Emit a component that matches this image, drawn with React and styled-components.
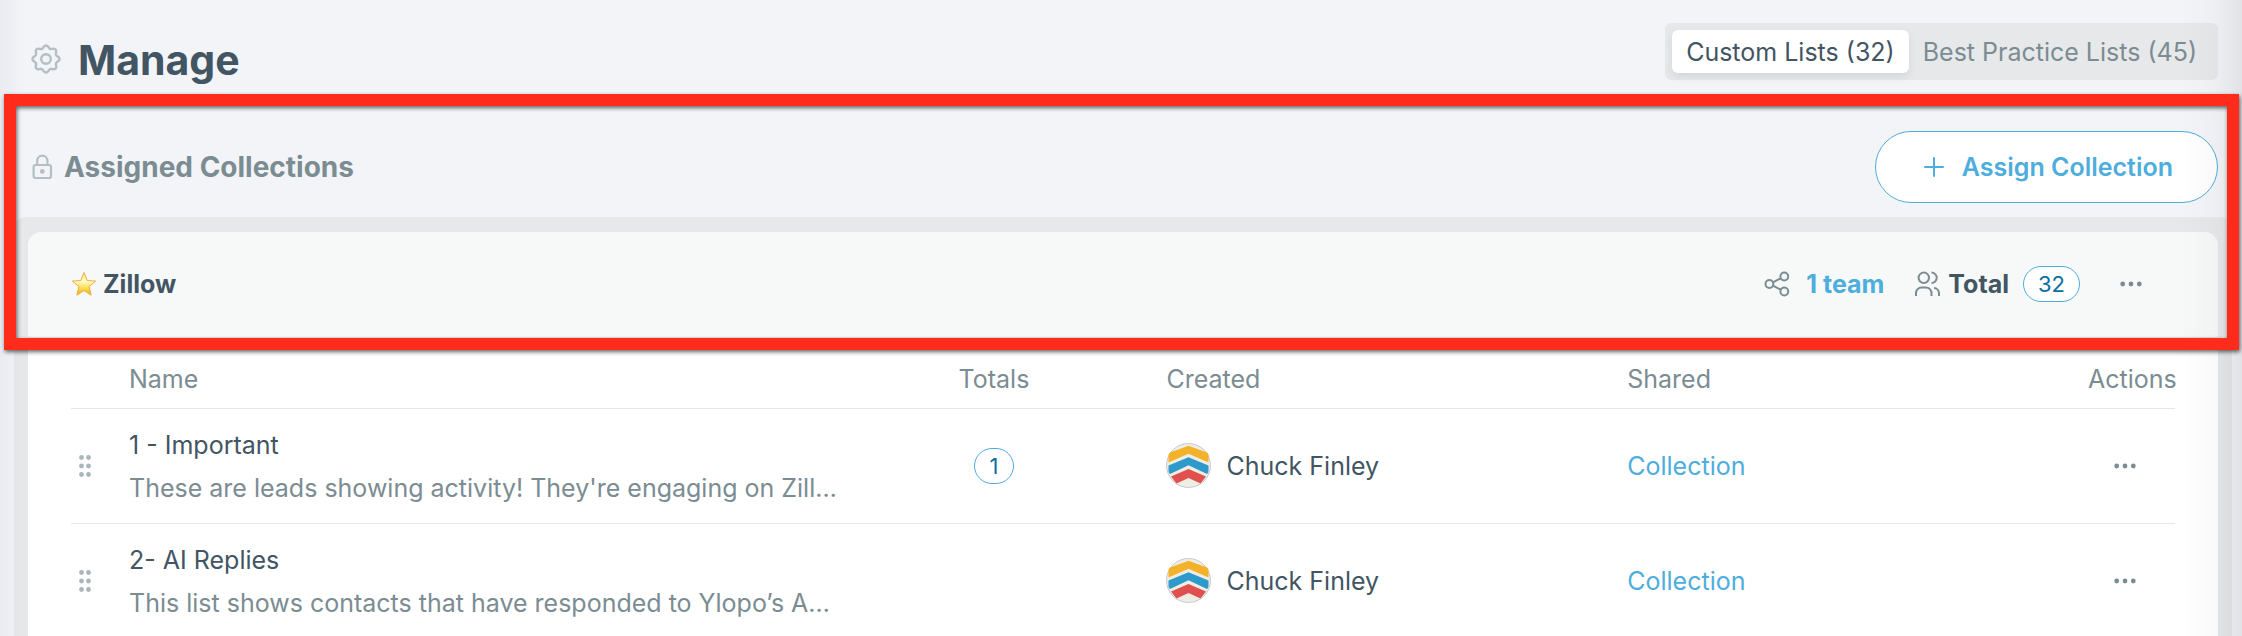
import React from "react";
import styled, { createGlobalStyle } from "styled-components";

const Global = createGlobalStyle`
  *, *::before, *::after { box-sizing: border-box; }
  body { margin: 0; background: #f3f4f8; color: #425563; font: 400 25px/32px Inter, "Liberation Sans", sans-serif; }
  button { font: inherit; color: inherit; cursor: pointer; }
  svg { display: block; flex: none; }
`;

const Page = styled.main`
  position: relative;
  min-height: 100vh;
  display: flex;
  flex-direction: column;
`;
const EdgeShade = styled.div`
  position: absolute;
  inset: 0;
  pointer-events: none;
  background:
    linear-gradient(to right, rgba(60, 70, 110, 0.05), transparent 24px),
    linear-gradient(to left, rgba(0, 0, 0, 0.07), rgba(0, 0, 0, 0.02) 28px, transparent 64px);
`;
const TopBar = styled.header`
  display: flex;
  align-items: flex-start;
  justify-content: space-between;
  height: 94px;
  padding: 23px 24px 0 31px;
`;
const TitleGroup = styled.div`
  display: flex;
  align-items: center;
  gap: 17px;
  height: 72px;
`;
const Title = styled.h1`
  margin: 0;
  padding-top: 1px;
  font-size: 41px;
  line-height: 48px;
  font-weight: 700;
`;
const Tabs = styled.div`
  display: flex;
  padding: 7px;
  border-radius: 6px;
  background: #e7e8ea;
`;
const Tab = styled.button`
  height: 43px;
  padding: 0 14px;
  border: 0;
  border-radius: 6px;
  color: ${(p) => (p.$active ? "#425563" : "#7b8c92")};
  background: ${(p) => (p.$active ? "#fff" : "transparent")};
  box-shadow: ${(p) => (p.$active ? "0 4px 8px rgba(66, 85, 99, 0.12)" : "none")};
`;
const Section = styled.section`
  position: relative;
  flex: 1;
  display: flex;
  flex-direction: column;
`;
const Highlight = styled.div`
  position: absolute;
  z-index: 2;
  top: 0;
  left: 4px;
  right: 3px;
  height: 256px;
  border: 12px solid #ff2c1b;
  filter: drop-shadow(1px 2px 2px rgba(0, 0, 0, 0.6));
  pointer-events: none;
`;
const SectionBar = styled.div`
  display: flex;
  align-items: center;
  justify-content: space-between;
  height: 123px;
  padding: 23px 24px 0 31px;
`;
const SectionTitle = styled.h2`
  display: flex;
  align-items: center;
  gap: 11px;
  margin: 0;
  font-size: 28px;
  font-weight: 700;
  color: #7b8c92;
`;
const AssignButton = styled.button`
  display: flex;
  align-items: center;
  gap: 18px;
  height: 72px;
  padding: 0 44px 0 48px;
  border: 1px solid #4daddd;
  border-radius: 36px;
  background: #fff;
  color: #4daddd;
  font-weight: 600;
`;
const Tray = styled.div`
  flex: 1;
  display: flex;
  margin: 0 10px 0 14px;
  padding: 15px 14px 0;
  border-radius: 12px 12px 0 0;
  background: #e7e8ea;
`;
const Card = styled.article`
  flex: 1;
  min-width: 0;
  border-radius: 14px 14px 0 0;
  background: #fff;
  overflow: hidden;
`;
const CardHeader = styled.header`
  display: flex;
  align-items: center;
  justify-content: space-between;
  height: 106px;
  padding: 0 76px 2px 43px;
  background: #f7f9f8;
  border-bottom: 1px solid #e2e5e6;
`;
const CardTitle = styled.h3`
  display: flex;
  align-items: center;
  gap: 6px;
  margin: 0;
  font-size: 25px;
  font-weight: 700;
`;
const Meta = styled.div`
  display: flex;
  align-items: center;
  font-weight: 700;
`;
const MetaItem = styled.div`
  display: flex;
  align-items: center;
  gap: ${(p) => p.$gap}px;
  margin-right: ${(p) => p.$after}px;
`;
const Link = styled.a`
  color: #4daddd;
  text-decoration: none;
`;
const Count = styled.span`
  display: inline-flex;
  align-items: center;
  justify-content: center;
  height: 36px;
  min-width: 40px;
  padding: 0 14px;
  border: 1px solid #4daddd;
  border-radius: 18px;
  background: #fff;
  color: #0a6f9e;
  font-size: 22px;
  font-weight: 400;
`;
const IconButton = styled.button`
  display: flex;
  margin-left: auto;
  padding: 8px 0;
  border: 0;
  background: none;
  color: #7b8c92;
`;
const TableWrap = styled.div`
  padding: 0 43px;
`;
const Table = styled.table`
  width: 100%;
  table-layout: fixed;
  border-collapse: collapse;
`;
const Col = styled.col`
  width: ${(p) => p.$width};
`;
const Head = styled.th`
  height: 70px;
  padding: 13px 0 0;
  border-bottom: 1px solid #e5e7e8;
  font-weight: 400;
  text-align: ${(p) => p.$align || "left"};
  color: #7b8c92;
`;
const Cell = styled.td`
  height: 115px;
  padding: 0 ${(p) => p.$end || 0}px 0 ${(p) => p.$start || 0}px;
  border-bottom: 1px solid #e5e7e8;
  text-align: ${(p) => p.$align || "left"};
  vertical-align: middle;
`;
const ListName = styled.div`
  margin: 1px 0 11px;
`;
const ListNote = styled.div`
  color: #7b8c92;
  white-space: nowrap;
`;
const Person = styled.div`
  display: flex;
  align-items: center;
  gap: 15px;
`;

// Eight soft lobes: the radius follows a cosine wave around the centre.
const gearOutline =
  Array.from({ length: 144 }, (_, i) => {
    const a = (i / 144) * Math.PI * 2;
    const r = 12.2 + 1.3 * Math.cos(8 * a);
    return `${i ? "L" : "M"}${(15 + r * Math.cos(a)).toFixed(2)} ${(15 + r * Math.sin(a)).toFixed(2)}`;
  }).join("") + "z";

const Gear = () => (
  <svg width="30" height="30" viewBox="0 0 30 30" fill="none" stroke="#b3bfc3" strokeWidth="2.4" strokeLinejoin="round">
    <path d={gearOutline} />
    <circle cx="15" cy="15" r="4.8" />
  </svg>
);
const Lock = () => (
  <svg width="22" height="26" viewBox="0 0 22 26" fill="none" stroke="#b3bfc3" strokeWidth="2.2">
    <rect x="2.6" y="11" width="17.4" height="13" rx="2" />
    <path d="M6.2 11V6.800a5.100 5.100 0 0 1 10.200 0V11" />
    <circle cx="11.300" cy="17.400" r="2.400" fill="#b3bfc3" stroke="none" />
  </svg>
);
const Plus = () => (
  <svg width="20" height="20" viewBox="0 0 20 20" stroke="currentColor" strokeWidth="2" strokeLinecap="round">
    <path d="M10 1v18M1 10h18" />
  </svg>
);
const Star = () => (
  <svg width="26" height="26" viewBox="0 0 26 26">
    <defs>
      <linearGradient id="star" x1="0" y1="0" x2="0" y2="1">
        <stop offset="0" stopColor="#fde78a" />
        <stop offset="0.4" stopColor="#fffbc4" />
        <stop offset="0.7" stopColor="#fcdb4c" />
        <stop offset="1" stopColor="#f3a820" />
      </linearGradient>
    </defs>
    <path d="M13 1.500l3.200 8 8.500.600-6.600 5.500 2.100 8.600-7.200-4.600L5.800 24.200l2.100-8.600L1.300 10.100l8.500-.6z" fill="url(#star)" stroke="#ecae45" strokeWidth="1" strokeLinejoin="round" />
  </svg>
);
const Share = () => (
  <svg width="26" height="26" viewBox="0 0 26 26" fill="none" stroke="#7b8c92" strokeWidth="2">
    <circle cx="5.400" cy="13" r="3.900" />
    <circle cx="20.300" cy="5.500" r="3.900" />
    <circle cx="20.300" cy="20.500" r="3.900" />
    <path d="M8.900 11.300l7.900-4M8.900 14.700l7.900 4" />
  </svg>
);
const Users = () => (
  <svg width="26" height="26" viewBox="0 0 26 26" fill="none" stroke="#7b8c92" strokeWidth="2">
    <circle cx="9.800" cy="6.800" r="5.200" />
    <path d="M2 25v-3a5.500 5.500 0 0 1 5.500-5.500h4.500A5.500 5.500 0 0 1 17.500 22v3" />
    <path d="M17.500 1.600a5.200 5.200 0 0 1 0 10.400M20 17a5.300 5.300 0 0 1 5 5.300V25" />
  </svg>
);
const Dots = () => (
  <svg width="22" height="6" viewBox="0 0 22 6" fill="currentColor">
    <circle cx="2.700" cy="3" r="2.400" />
    <circle cx="11" cy="3" r="2.400" />
    <circle cx="19.300" cy="3" r="2.400" />
  </svg>
);
const Grip = () => (
  <svg width="12" height="22" viewBox="0 0 12 22" fill="#a9b6bb">
    {[2.5, 11, 19.5].map((y) => (
      <React.Fragment key={y}>
        <circle cx="2.500" cy={y} r="2.400" />
        <circle cx="9.500" cy={y} r="2.400" />
      </React.Fragment>
    ))}
  </svg>
);
const Avatar = () => (
  <svg width="45" height="45" viewBox="0 0 45 45">
    <circle cx="22.500" cy="22.500" r="22" fill="#eeeee4" stroke="#c5c9d2" />
    <path d="M22.500 2.700L41 9.500Q42.500 10.500 42.500 12V19.500L22.500 10.800L2.500 19.500V12Q2.500 10.500 4 9.500z" fill="#f4b22b" />
    <path d="M22.500 14.300L42.500 22.500V28Q42.500 30 41 31L22.500 22.300L4 31Q2.500 30 2.500 28V22.500z" fill="#2d9acb" />
    <path d="M22.500 26L40 33.500L34.500 40.500L22.500 35L10.500 40.500L5 33.500z" fill="#e0504f" />
  </svg>
);

const lists = [
  { name: "1 - Important", note: "These are leads showing activity! They're engaging on Zill…", total: 1, owner: "Chuck Finley" },
  { name: "2- AI Replies", note: "This list shows contacts that have responded to Ylopo’s A…", owner: "Chuck Finley" },
];

export default function App() {
  return (
    <Page>
      <Global />
      <TopBar>
        <TitleGroup>
          <Gear />
          <Title>Manage</Title>
        </TitleGroup>
        <Tabs>
          <Tab type="button" $active>Custom Lists (32)</Tab>
          <Tab type="button">Best Practice Lists (45)</Tab>
        </Tabs>
      </TopBar>
      <Section>
        <SectionBar>
          <SectionTitle>
            <Lock />
            Assigned Collections
          </SectionTitle>
          <AssignButton type="button">
            <Plus />
            Assign Collection
          </AssignButton>
        </SectionBar>
        <Tray>
          <Card>
            <CardHeader>
              <CardTitle>
                <Star />
                Zillow
              </CardTitle>
              <Meta>
                <MetaItem $gap={16} $after={30}>
                  <Share />
                  <Link href="#team">1 team</Link>
                </MetaItem>
                <MetaItem $gap={8} $after={14}>
                  <Users />
                  Total
                </MetaItem>
                <MetaItem $gap={0} $after={40}>
                  <Count>32</Count>
                </MetaItem>
                <IconButton type="button" aria-label="Collection options"><Dots /></IconButton>
              </Meta>
            </CardHeader>
            <TableWrap>
              <Table>
                <colgroup>
                  <Col $width="58px" />
                  <Col />
                  <Col $width="16.4%" />
                  <Col $width="21.9%" />
                  <Col $width="21.9%" />
                  <Col $width="87px" />
                </colgroup>
                <thead>
                  <tr>
                    <Head />
                    <Head>Name</Head>
                    <Head $align="center">Totals</Head>
                    <Head>Created</Head>
                    <Head>Shared</Head>
                    <Head $align="right">Actions</Head>
                  </tr>
                </thead>
                <tbody>
                  {lists.map((l) => (
                    <tr key={l.name}>
                      <Cell $start={8}><Grip /></Cell>
                      <Cell>
                        <ListName>{l.name}</ListName>
                        <ListNote>{l.note}</ListNote>
                      </Cell>
                      <Cell $align="center">{l.total && <Count>{l.total}</Count>}</Cell>
                      <Cell>
                        <Person>
                          <Avatar />
                          {l.owner}
                        </Person>
                      </Cell>
                      <Cell><Link href="#collection">Collection</Link></Cell>
                      <Cell $align="right" $end={39}>
                        <IconButton type="button" aria-label={`Actions for ${l.name}`}><Dots /></IconButton>
                      </Cell>
                    </tr>
                  ))}
                </tbody>
              </Table>
            </TableWrap>
          </Card>
        </Tray>
        <Highlight />
      </Section>
      <EdgeShade />
    </Page>
  );
}
